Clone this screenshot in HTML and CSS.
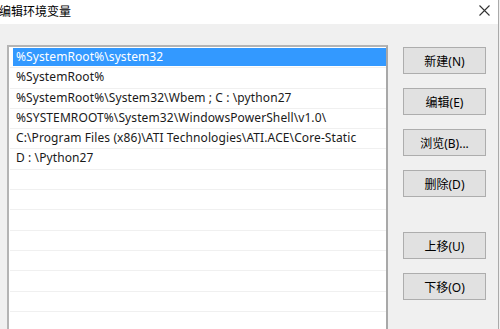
FILE: index.html
```html
<!DOCTYPE html>
<html lang="zh-CN">
<head>
<meta charset="utf-8">
<title>编辑环境变量</title>
<link rel="stylesheet" href="styles.css">
</head>
<body>
<div class="window">
  <div class="titlebar">
    <span class="title">编辑环境变量</span>
    <span class="close">
      <svg width="11" height="11" viewBox="0 0 11 11"><path d="M0.5 0.5L10.5 10.5M10.5 0.5L0.5 10.5" stroke="#333" stroke-width="1.1" fill="none"/></svg>
    </span>
  </div>
  <div class="content">
    <div class="list">
      <div class="row"><div class="cell selected">%SystemRoot%\system32</div></div>
      <div class="row"><div class="cell">%SystemRoot%</div></div>
      <div class="row"><div class="cell">%SystemRoot%\System32\Wbem ; C : \python27</div></div>
      <div class="row"><div class="cell">%SYSTEMROOT%\System32\WindowsPowerShell\v1.0\</div></div>
      <div class="row"><div class="cell">C:\Program Files (x86)\ATI Technologies\ATI.ACE\Core-Static</div></div>
      <div class="row"><div class="cell">D : \Python27</div></div>
      <div class="row"><div class="cell"></div></div>
      <div class="row"><div class="cell"></div></div>
      <div class="row"><div class="cell"></div></div>
      <div class="row"><div class="cell"></div></div>
      <div class="row"><div class="cell"></div></div>
      <div class="row"><div class="cell"></div></div>
      <div class="row"><div class="cell"></div></div>
      <div class="row"><div class="cell"></div></div>
    </div>
    <div class="buttons">
      <button class="btn">新建(N)</button>
      <button class="btn">编辑(E)</button>
      <button class="btn">浏览(B)...</button>
      <button class="btn">删除(D)</button>
      <button class="btn btn-gap">上移(U)</button>
      <button class="btn">下移(O)</button>
    </div>
  </div>
</div>
</body>
</html>
```

FILE: styles.css
```css
html, body {
  margin: 0;
  padding: 0;
  width: 500px;
  height: 329px;
  overflow: hidden;
  background: #f0f0f0;
  font-family: "Noto Sans", "Noto Sans CJK SC", sans-serif;
  font-size: 12px;
  color: #1a1a1a;
}

.window {
  width: 498px;
  height: 329px;
  border-right: 1px solid #aaaaaa;
  background: #f0f0f0;
  overflow: hidden;
}

.titlebar {
  height: 24px;
  background: #ffffff;
  display: flex;
  align-items: center;
  justify-content: space-between;
}

.title {
  font-family: "Noto Sans CJK SC", sans-serif;
  font-size: 12px;
  color: #000;
  margin-left: -1px;
  margin-top: -3px;
}

.close {
  display: flex;
  margin-right: 8px;
  margin-top: -4px;
}

.content {
  display: flex;
  align-items: flex-start;
  padding: 21px 0 0 7px;
}

.list {
  width: 376px;
  height: 281px;
  border: 2px solid #b4b4b4;
  border-right-color: #a8a8a8;
  border-bottom: 0;
  background: #ffffff;
  padding: 1px 0 0 1px;
  overflow: hidden;
}

.row {
  height: 19.3px;
  border-bottom: 1px solid #f0f0f0;
  padding-left: 3px;
  display: flex;
}

.cell {
  flex: 1;
  padding-left: 3px;
  line-height: 18px;
  height: 18px;
  white-space: nowrap;
  letter-spacing: 0.1px;
}

.cell.selected {
  background: #3399ff;
  color: #ffffff;
}

.buttons {
  display: flex;
  flex-direction: column;
  gap: 14px;
  margin-left: 15px;
  margin-top: 2px;
}

.btn {
  width: 83px;
  height: 27px;
  margin: 0;
  padding: 0;
  background: #e1e1e1;
  border: 1px solid #adadad;
  font-family: "Noto Sans", "Noto Sans CJK SC", sans-serif;
  font-size: 12px;
  color: #000;
}

.btn-gap {
  margin-top: 21px;
}
```
